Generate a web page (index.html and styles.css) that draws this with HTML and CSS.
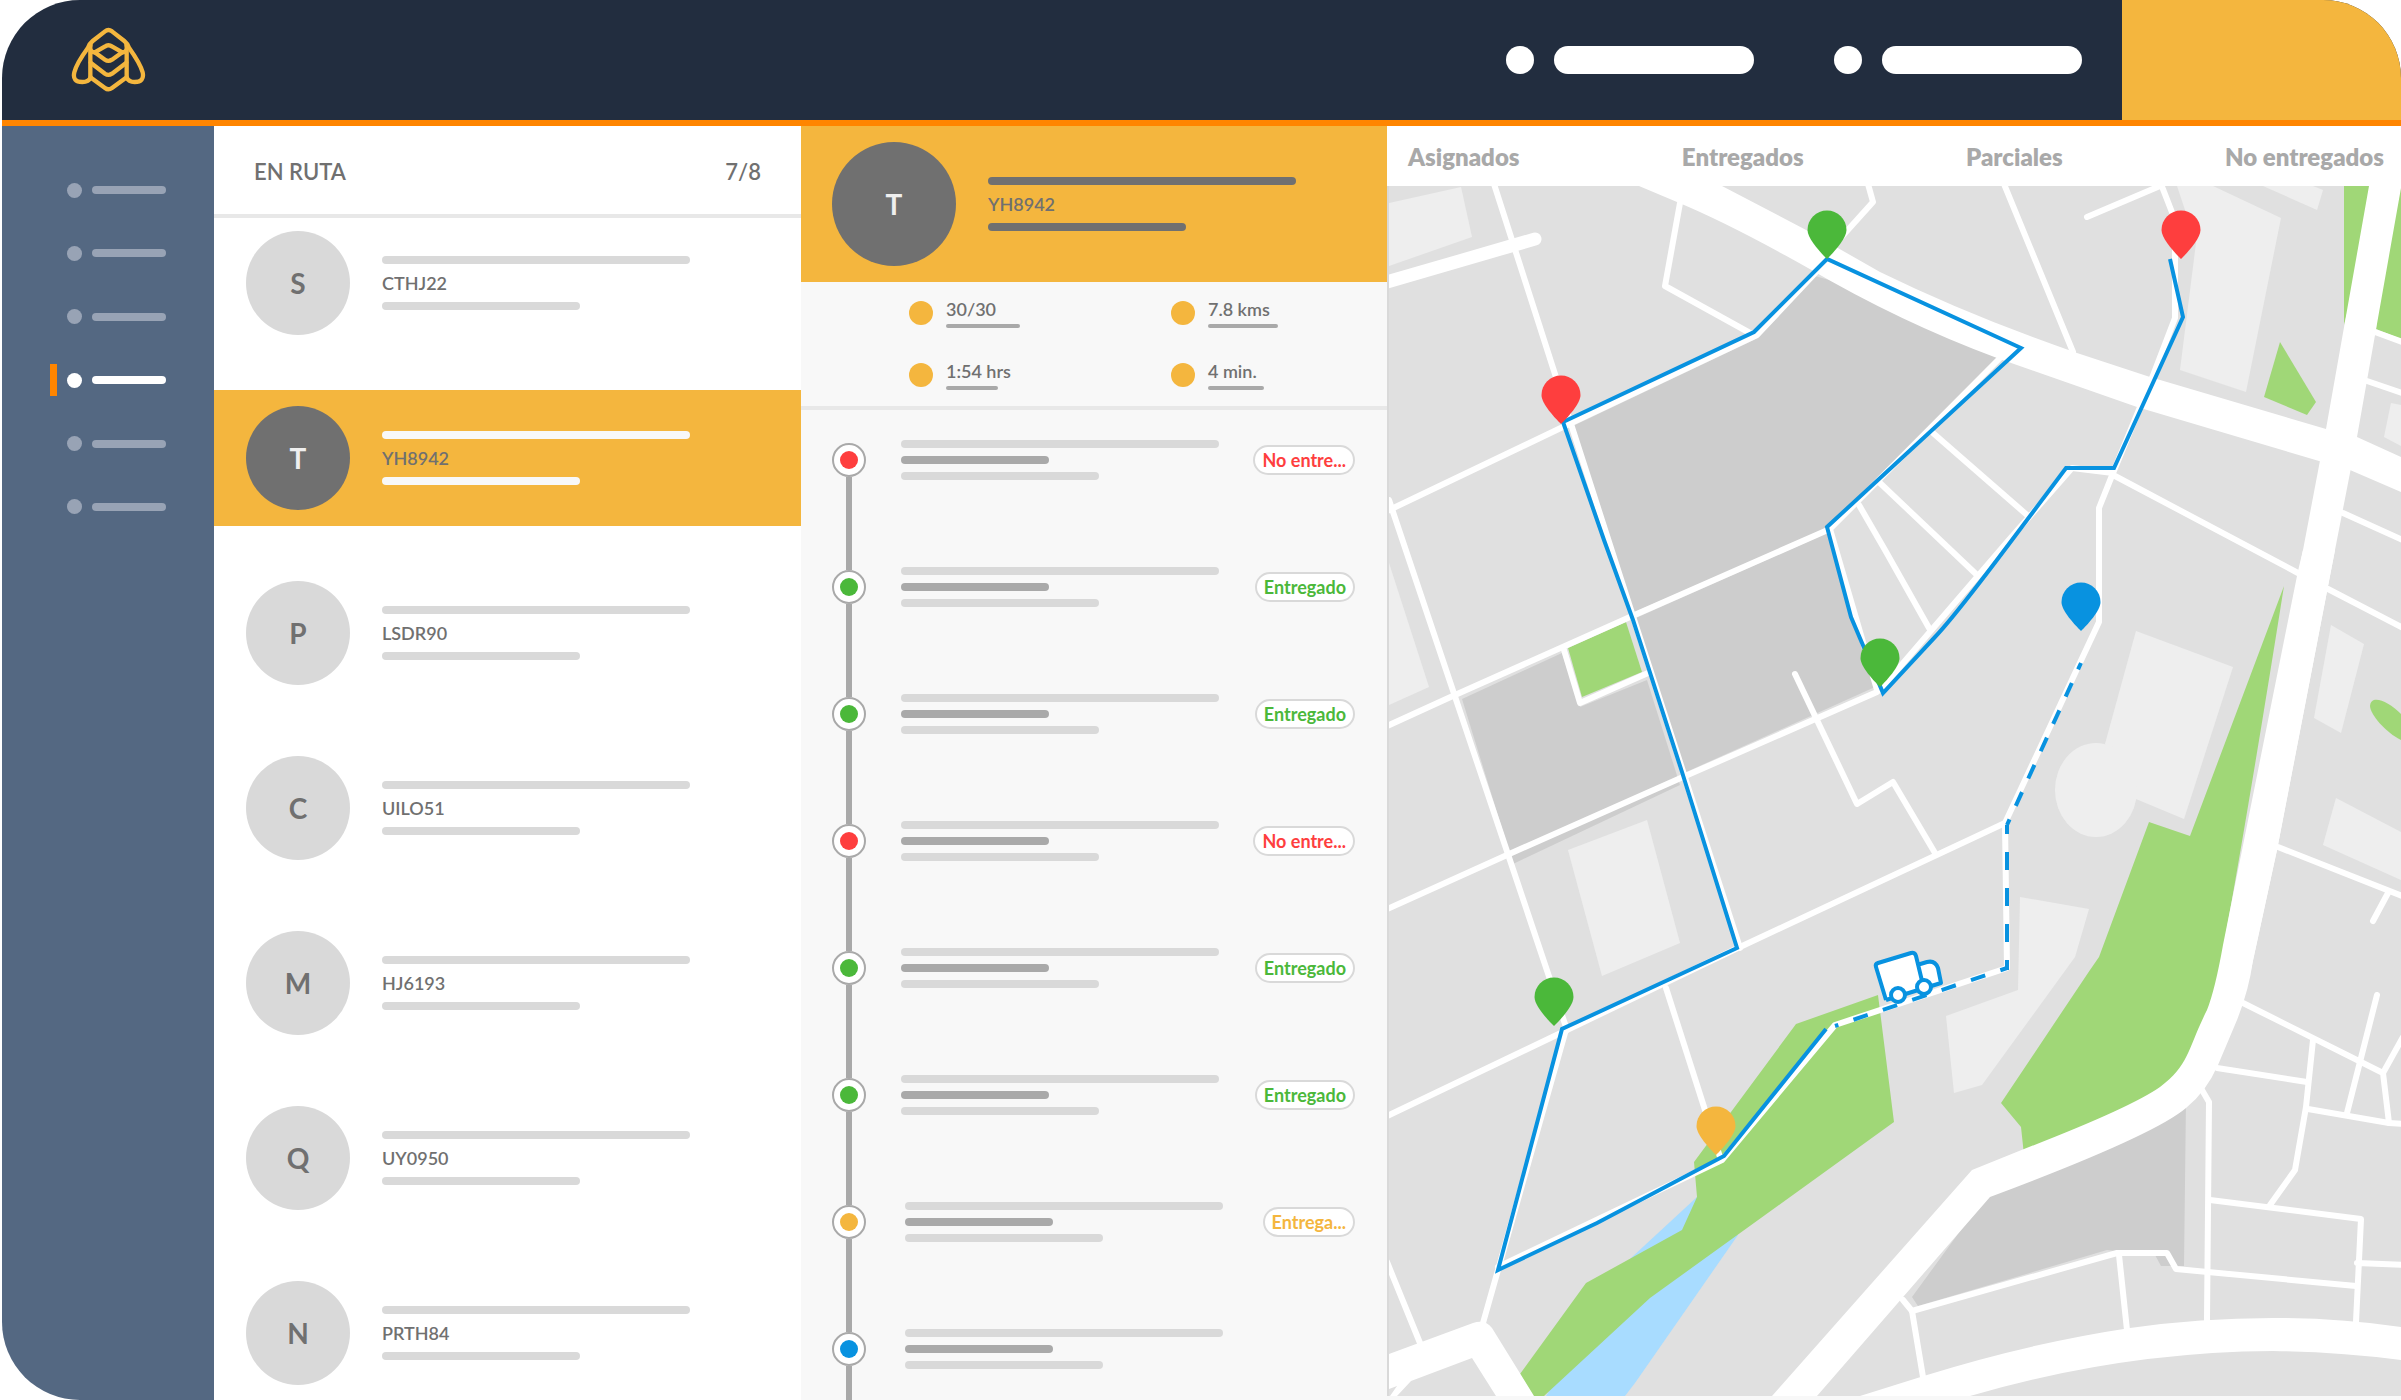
FILE: index.html
```html
<!DOCTYPE html>
<html lang="es">
<head>
<meta charset="utf-8">
<meta name="viewport" content="width=device-width, initial-scale=1">
<title>Rutas</title>
<link rel="stylesheet" href="styles.css">
</head>
<body>
<div class="app">
  <header class="topbar">
    <a class="logo" href="#" aria-label="Inicio">
      <svg viewBox="60 48 231 204" width="77" height="68" fill="none" stroke="currentColor" stroke-width="13" stroke-linejoin="round" stroke-linecap="round">
        <path d="M122 202 Q116 216 97 216 Q66 216 73 187 Q80 160 113 115 Q117 102 128 93 L165 64 Q175 56 186 64 L223 93 Q234 102 238 115 Q270 160 278 187 Q284 216 254 216 Q236 216 230 202"/>
        <path d="M121 124 V202 L165 234 Q175 242 186 234 L230 202 V124"/>
        <path d="M122 104 Q117 126 134 127 L164 110 Q175 102 187 110 L217 127 Q234 126 229 104"/>
        <path d="M134 127 L165 149 Q175 156 186 149 L217 127"/>
        <path d="M122 158 L165 191 Q175 198 186 191 L229 158"/>
      </svg>
    </a>
    <div class="topbar-links">
      <a class="top-link" href="#" aria-label="Cuenta"><span class="top-dot"></span><span class="top-bar"></span></a>
      <a class="top-link" href="#" aria-label="Ayuda"><span class="top-dot"></span><span class="top-bar"></span></a>
    </div>
    <div class="topbar-block"></div>
  </header>

  <nav class="sidebar" aria-label="Principal">
    <ul class="nav-list">
      <li><a class="nav-item" href="#" aria-label="Sección 1"><span class="nav-mark"></span><span class="nav-dot"></span><span class="nav-bar"></span></a></li>
      <li><a class="nav-item" href="#" aria-label="Sección 2"><span class="nav-mark"></span><span class="nav-dot"></span><span class="nav-bar"></span></a></li>
      <li><a class="nav-item" href="#" aria-label="Sección 3"><span class="nav-mark"></span><span class="nav-dot"></span><span class="nav-bar"></span></a></li>
      <li><a class="nav-item is-active" href="#" aria-label="Sección 4" aria-current="page"><span class="nav-mark"></span><span class="nav-dot"></span><span class="nav-bar"></span></a></li>
      <li><a class="nav-item" href="#" aria-label="Sección 5"><span class="nav-mark"></span><span class="nav-dot"></span><span class="nav-bar"></span></a></li>
      <li><a class="nav-item" href="#" aria-label="Sección 6"><span class="nav-mark"></span><span class="nav-dot"></span><span class="nav-bar"></span></a></li>
    </ul>
  </nav>

  <section class="routes">
    <div class="routes-head"><h2>EN RUTA</h2><span>7/8</span></div>
    <ul class="route-list">
      <li><a class="route" href="#"><span class="avatar">S</span><span class="route-info"><span class="bar bar-long"></span><span class="plate">CTHJ22</span><span class="bar bar-mid"></span></span></a></li>
      <li><a class="route is-active" href="#"><span class="avatar">T</span><span class="route-info"><span class="bar bar-long"></span><span class="plate">YH8942</span><span class="bar bar-mid"></span></span></a></li>
      <li><a class="route" href="#"><span class="avatar">P</span><span class="route-info"><span class="bar bar-long"></span><span class="plate">LSDR90</span><span class="bar bar-mid"></span></span></a></li>
      <li><a class="route" href="#"><span class="avatar">C</span><span class="route-info"><span class="bar bar-long"></span><span class="plate">UILO51</span><span class="bar bar-mid"></span></span></a></li>
      <li><a class="route" href="#"><span class="avatar">M</span><span class="route-info"><span class="bar bar-long"></span><span class="plate">HJ6193</span><span class="bar bar-mid"></span></span></a></li>
      <li><a class="route" href="#"><span class="avatar">Q</span><span class="route-info"><span class="bar bar-long"></span><span class="plate">UY0950</span><span class="bar bar-mid"></span></span></a></li>
      <li><a class="route" href="#"><span class="avatar">N</span><span class="route-info"><span class="bar bar-long"></span><span class="plate">PRTH84</span><span class="bar bar-mid"></span></span></a></li>
    </ul>
  </section>

  <section class="detail">
    <div class="detail-head">
      <span class="avatar avatar-large">T</span>
      <div class="detail-info"><span class="bar bar-long"></span><span class="plate">YH8942</span><span class="bar bar-mid"></span></div>
    </div>
    <ul class="stats">
      <li class="stat"><span class="stat-dot"></span><span class="stat-text">30/30<span class="stat-line w-74"></span></span></li>
      <li class="stat"><span class="stat-dot"></span><span class="stat-text">7.8 kms<span class="stat-line w-70"></span></span></li>
      <li class="stat"><span class="stat-dot"></span><span class="stat-text">1:54 hrs<span class="stat-line w-52"></span></span></li>
      <li class="stat"><span class="stat-dot"></span><span class="stat-text">4 min.<span class="stat-line w-56"></span></span></li>
    </ul>
    <ol class="timeline">
      <li class="stop red"><span class="track"><span class="ring"></span></span><div class="stop-body"><div class="lines"><span class="bar"></span><span class="bar"></span><span class="bar"></span></div><span class="badge">No entre...</span></div></li>
      <li class="stop green"><span class="track"><span class="ring"></span></span><div class="stop-body"><div class="lines"><span class="bar"></span><span class="bar"></span><span class="bar"></span></div><span class="badge">Entregado</span></div></li>
      <li class="stop green"><span class="track"><span class="ring"></span></span><div class="stop-body"><div class="lines"><span class="bar"></span><span class="bar"></span><span class="bar"></span></div><span class="badge">Entregado</span></div></li>
      <li class="stop red"><span class="track"><span class="ring"></span></span><div class="stop-body"><div class="lines"><span class="bar"></span><span class="bar"></span><span class="bar"></span></div><span class="badge">No entre...</span></div></li>
      <li class="stop green"><span class="track"><span class="ring"></span></span><div class="stop-body"><div class="lines"><span class="bar"></span><span class="bar"></span><span class="bar"></span></div><span class="badge">Entregado</span></div></li>
      <li class="stop green"><span class="track"><span class="ring"></span></span><div class="stop-body"><div class="lines"><span class="bar"></span><span class="bar"></span><span class="bar"></span></div><span class="badge">Entregado</span></div></li>
      <li class="stop yellow pending"><span class="track"><span class="ring"></span></span><div class="stop-body"><div class="lines"><span class="bar"></span><span class="bar"></span><span class="bar"></span></div><span class="badge">Entrega...</span></div></li>
      <li class="stop blue pending"><span class="track"><span class="ring"></span></span><div class="stop-body"><div class="lines"><span class="bar"></span><span class="bar"></span><span class="bar"></span></div></div></li>
    </ol>
  </section>

  <section class="map-panel">
    <div class="tabs">
      <button type="button">Asignados</button>
      <button type="button">Entregados</button>
      <button type="button">Parciales</button>
      <button type="button">No entregados</button>
    </div>
    <svg class="map" viewBox="1389 186 1012 1210" preserveAspectRatio="xMinYMin slice" role="img" aria-label="Mapa de la ruta">
      <defs>
        <path id="pin" d="M0 0C-6 -6 -19.500 -20 -19.500 -29A19.500 19.500 0 0 1 19.500 -29C19.500 -20 6 -6 0 0Z"/>
      </defs>
      <rect class="land" x="1389" y="186" width="1012" height="1210"/>
      <!-- city blocks -->
      <g class="block">
        <path d="M1573 426L1758 338L1815 276L1900 300L2000 356L1828 529L1632 613Z"/>
        <path d="M1636 618L1827 533L1875 687L1684 773Z"/>
        <path d="M1462 699L1562 653L1580 707L1647 680L1680 785L1513 864Z"/>
        <path d="M2186 1100L2184 1266H2161L2155 1255L2107 1250L1918 1306L1912 1297L1985 1197Z"/>
      </g>
      <!-- buildings -->
      <g class="building">
        <path d="M1389 203L1461 187L1472 237L1389 266Z"/>
        <path d="M1389 563L1429 687L1389 705Z"/>
        <path d="M1568 850L1647 820L1680 943L1602 976Z"/>
        <path d="M2177 186H2213L2281 218L2246 392L2180 370L2196 243L2185 210Z"/>
        <path d="M2263 186H2313L2323 190L2317 210Z"/>
        <path d="M2391 403L2401 405V446L2384 437Z"/>
        <path d="M2136 631L2233 667L2184 819L2136 799L2105 744Z"/>
        <ellipse cx="2096" cy="790" rx="41" ry="47"/>
        <path d="M2331 625L2364 644L2341 733L2314 718Z"/>
        <path d="M2336 798L2401 832V880L2323 845Z"/>
        <path d="M2020 897L2089 909L2075 957L1982 1085L1954 1093L1946 1016L2018 990Z"/>
      </g>
      <path class="water" d="M1697 1197L1631 1258L1546 1396H1625L1635 1383L1738 1235Z"/>
      <!-- parks -->
      <g class="park">
        <path d="M1568 648L1626 622L1642 672L1582 697Z"/>
        <path d="M2344 186H2380L2344 325Z"/>
        <path d="M2401 186V339L2376 329L2390 186Z"/>
        <path d="M2280 342L2316 402L2307 415L2264 397Z"/>
        <path d="M2401 714C2388 701 2371 694 2370 706C2370 714 2386 733 2401 740Z"/>
        <path d="M2284 586Q2250 800 2223 950L2215 1040L2150 1120L2024 1155L2021 1127L2001 1103L2090 970L2099 957L2149 822L2190 836Z"/>
        <path d="M1878 995L1796 1024L1694 1162L1697 1197L1682 1230L1586 1283L1520 1374L1533 1396H1544L1650 1298L1894 1122Z"/>
      </g>
      <!-- avenues -->
      <g class="avenue">
        <path d="M1639 186H1722L1808 231L1880 272Q1970 316 2077 353L2150 377L2326 429L2357 437L2401 457V492L2350 470L2319 461L2137 407L1997 358Q1900 322 1808 268Q1730 224 1677 202Z"/>
        <path d="M2335 550L2277 850L2253 960Q2249 990 2237 1020L2218 1065Q2206 1092 2186 1108Q2153 1136 1990 1197L1817 1396H1772L1972 1170L2024 1149Q2130 1108 2160 1087C2190 1064 2187 1050 2207 1010Q2215 990 2223 945L2298 571L2303 550Z"/>
        <path d="M2369 186H2401V188L2357 437L2335 550L2277 850L2251 970H2219L2303 550L2326 429Z"/>
        <path d="M1860 1396L1927 1375Q2030 1343 2130 1328Q2200 1318 2273 1318Q2340 1318 2401 1327V1360Q2340 1352 2273 1351Q2120 1352 1970 1396Z"/>
        <path d="M1389 1354L1473 1323Q1485 1319 1492 1328L1534 1396H1496L1472 1358L1411 1381L1397 1396H1390L1397 1386L1389 1389Z"/>
      </g>
      <path class="street street-wide" d="M1380 284L1535 239"/>
      <!-- streets -->
      <g class="street">
        <path d="M1494 184L1571 424L1740 948"/>
        <path d="M1385 512L1567 425L1757 335L1820 268"/>
        <path d="M1389 500L1567 1030"/>
        <path d="M1385 727L1455 695L1630 617L1830 529"/>
        <path d="M1385 910L1507 855L1683 777L1877 692"/>
        <path d="M1564 650L1580 703L1648 673"/>
        <path d="M1680 203L1665 286L1750 333"/>
        <path d="M1868 184L1873 202L1837 242"/>
        <path d="M2004 184L2073 352"/>
        <path d="M2087 217L2160 186"/>
        <path d="M2161 184L2175 220V318L2152 378L2113 473L2099 508V622L2005 823L2007 968L1835 1025L1722 1160L1498 1267"/>
        <path d="M2113 473L2072 468L2008 541L1880 690"/>
        <path d="M2115 476L2298 573"/>
        <path d="M2328 589L2405 629"/>
        <path d="M1933 433L2027 515M1880 483L1977 575M1859 505L1885 550L1929 628"/>
        <path d="M2008 350L1830 529L1877 690"/>
        <path d="M1795 674L1857 804L1893 782L1935 853"/>
        <path d="M2005 823L1740 947L1567 1030L1385 1117"/>
        <path d="M1666 988L1705 1110L1720 1157"/>
        <path d="M1565 1033L1498 1270L1483 1323"/>
        <path d="M1387 1262L1420 1343"/>
        <path d="M2375 332L2405 343M2367 381L2405 394M2343 513L2405 541"/>
        <path d="M2278 847L2405 897M2388 893L2373 921"/>
        <path d="M2243 1003L2383 1073L2403 1037M2383 1073L2389 1123"/>
        <path d="M2308 1109L2389 1123L2405 1124M2377 995L2347 1113"/>
        <path d="M2313 1040L2306 1107L2295 1170L2270 1205"/>
        <path d="M2217 1068L2307 1082"/>
        <path d="M2202 1090L2209 1102L2207 1320"/>
        <path d="M2210 1200L2361 1219L2356 1322M2357 1263L2405 1265"/>
        <path d="M1903 1300L1912 1311L2117 1253H2167L2176 1269L2356 1286"/>
        <path d="M1912 1311L1923 1377M2119 1255L2127 1330"/>
      </g>
      <!-- travelled and remaining route -->
      <g class="path">
        <path d="M2170 259L2183 317L2114 468H2066L2012 540Q1955 616 1935 637L1883 693L1865 650L1851 617L1827 527L2021 348L1827 259L1754 332L1563 422L1604 540L1633 620L1682 772L1737 948L1562 1029L1498 1270L1597 1223L1724 1156L1826 1029"/>
        <path d="M2081 663L2007 825" stroke-dasharray="15 15" stroke-dashoffset="8"/>
        <path d="M2007 825V970" stroke-dasharray="18 18" stroke-dashoffset="9"/>
        <path d="M2007 968L1835 1026" stroke-dasharray="15 16" stroke-dashoffset="8"/>
      </g>
      <g class="truck">
        <path d="M1886 1000L1876 967Q1875 964 1878 963L1911 953Q1915 952 1916 956L1923 985M1917 965L1927 962Q1935 960 1938 968L1941 983L1886 1000"/>
        <circle cx="1898" cy="995" r="7"/>
        <circle cx="1924" cy="987" r="7"/>
      </g>
      <use class="pin green" href="#pin" x="1827" y="259"/>
      <use class="pin red" href="#pin" x="1561" y="424"/>
      <use class="pin red" href="#pin" x="2181" y="259"/>
      <use class="pin blue" href="#pin" x="2081" y="631"/>
      <use class="pin green" href="#pin" x="1880" y="687"/>
      <use class="pin green" href="#pin" x="1554" y="1026"/>
      <use class="pin yellow" href="#pin" x="1716" y="1155"/>
    </svg>
  </section>
</div>
</body>
</html>
```
FILE: styles.css
```css
:root {
  --navy: #222d3f;
  --slate: #546882;
  --orange: #ff8500;
  --amber: #f4b63e;
  --text: #707070;
  --muted: #a9a9a9;
  --soft: #d9d9d9;
  --rule: #e8e8e8;
  --panel: #f8f8f8;
  --red: #fe3e3e;
  --green: #4bb83a;
  --blue: #0892e0;
}

* { box-sizing: border-box; }

body {
  margin: 0;
  background: #fff;
  color: var(--text);
  font-family: Lato, "Open Sans", sans-serif;
  font-size: 18px;
  line-height: 24px;
  font-weight: 700;
}

ul, ol { list-style: none; margin: 0; padding: 0; }
a { color: inherit; text-decoration: none; }

.app {
  display: grid;
  grid-template-columns: 212px minmax(0, 587fr) minmax(0, 586fr) minmax(0, 1014fr);
  grid-template-rows: 126px 1fr;
  min-height: 100vh;
  margin-left: 2px;
  border-radius: 78px 78px 0 78px;
  overflow: hidden;
}

/* Top bar */
.topbar {
  grid-column: 1 / -1;
  display: flex;
  align-items: center;
  background: var(--navy);
  border-bottom: 6px solid var(--orange);
}
.logo { margin-left: 68px; color: var(--amber); }
.logo svg { display: block; }
.topbar-links { display: flex; gap: 80px; margin-left: auto; }
.top-link { display: flex; gap: 20px; }
.top-dot { width: 28px; height: 28px; border-radius: 50%; background: #fff; }
.top-bar { width: 200px; height: 28px; border-radius: 14px; background: #fff; }
.topbar-block { align-self: stretch; width: 279px; margin-left: 40px; background: var(--amber); }

/* Side navigation */
.sidebar { background: var(--slate); padding-top: 48px; }
.nav-list { display: flex; flex-direction: column; justify-content: space-between; height: 349px; }
.nav-item { display: flex; align-items: center; gap: 10px; height: 32px; padding-left: 48px; }
.nav-mark { width: 7px; height: 32px; }
.nav-dot { width: 15px; height: 15px; border-radius: 50%; background: #98a3b5; }
.nav-bar { width: 74px; height: 8px; border-radius: 4px; background: #98a3b5; }
.nav-item.is-active .nav-mark { background: var(--orange); }
.nav-item.is-active .nav-dot,
.nav-item.is-active .nav-bar { background: #fff; }

/* Shared pieces */
.bar { display: block; height: 8px; border-radius: 4px; background: var(--soft); }
.bar-long { width: 308px; }
.bar-mid { width: 198px; }
.avatar {
  display: flex;
  align-items: center;
  justify-content: center;
  flex: none;
  width: 104px;
  height: 104px;
  border-radius: 50%;
  background: var(--soft);
  font-size: 28px;
}
.plate { display: block; font-weight: 600; }

/* Vehicles on route */
.routes { background: #fff; }
.routes-head {
  display: flex;
  justify-content: space-between;
  align-items: center;
  height: 92px;
  padding: 4px 40px 0;
  border-bottom: 4px solid var(--rule);
  font-size: 22px;
  font-weight: 600;
}
.routes-head h2 { margin: 0; font: inherit; }
.route-list { display: flex; flex-direction: column; gap: 39px; margin-top: -3px; }
.route { display: flex; align-items: center; gap: 32px; padding: 16px 32px; }
.route-list li:last-child .route { padding-bottom: 0; }
.route-info, .detail-info { display: flex; flex-direction: column; gap: 7px; }
.route.is-active { background: var(--amber); }
.route.is-active .bar { background: var(--panel); }
.route.is-active .avatar, .avatar-large { background: var(--text); color: #efefef; }

/* Selected vehicle */
.detail { display: flex; flex-direction: column; background: var(--panel); }
.detail-head {
  display: flex;
  align-items: center;
  gap: 32px;
  height: 156px;
  padding: 0 31px;
  background: var(--amber);
}
.avatar-large { width: 124px; height: 124px; }
.detail-info .bar { background: var(--text); }
.stats {
  display: grid;
  grid-template-columns: 262px 1fr;
  grid-auto-rows: 62px;
  height: 128px;
  padding-left: 108px;
  padding-top: 13px;
  border-bottom: 4px solid var(--rule);
}
.stat { display: flex; gap: 13px; }
.stat-dot { flex: none; width: 24px; height: 24px; margin-top: 6px; border-radius: 50%; background: var(--amber); }
.stat-text { font-weight: 600; line-height: 28px; }
.stat-line { display: block; height: 4px; margin-top: 1px; border-radius: 2px; background: var(--muted); }
.w-74 { width: 74px; }
.w-70 { width: 70px; }
.w-52 { width: 52px; }
.w-56 { width: 56px; }

.timeline { flex: 1; display: flex; flex-direction: column; padding: 33px 32px 0 31px; }
.stop { display: flex; gap: 35px; min-height: 127px; }
.stop:last-child { flex: 1; min-height: 60px; }
.stop.pending { gap: 39px; }
.track { display: flex; flex-direction: column; align-items: center; }
.track::after { content: ""; flex: 1; width: 6px; background: var(--muted); }
.ring {
  display: flex;
  align-items: center;
  justify-content: center;
  width: 34px;
  height: 34px;
  border: 2px solid var(--muted);
  border-radius: 50%;
  background: #fff;
}
.ring::after { content: ""; width: 18px; height: 18px; border-radius: 50%; background: currentColor; }
.stop-body { flex: 1; display: flex; justify-content: space-between; align-items: center; height: 34px; }
.lines { display: flex; flex-direction: column; gap: 8px; }
.lines .bar { width: 318px; }
.lines .bar:nth-child(2) { width: 148px; background: var(--muted); }
.lines .bar:nth-child(3) { width: 198px; }
.badge {
  height: 30px;
  padding: 0 7px;
  border: 2px solid var(--soft);
  border-radius: 15px;
  background: #fff;
  line-height: 27px;
}
.red { color: var(--red); }
.green { color: var(--green); }
.yellow { color: var(--amber); }
.blue { color: var(--blue); }

/* Map */
.map-panel {
  display: flex;
  flex-direction: column;
  padding-bottom: 4px;
  background: var(--panel);
}
.tabs {
  display: flex;
  justify-content: space-between;
  align-items: center;
  height: 60px;
  padding: 2px 17px 0 21px;
  background: #fff;
}
.tabs button {
  padding: 0;
  border: 0;
  background: none;
  color: var(--muted);
  font: 800 24px/32px Lato, "Open Sans", sans-serif;
}
.map { flex: 1 1 0; min-height: 0; width: 100%; border-left: 2px solid var(--soft); }
.land { fill: #e0e0e0; }
.block { fill: #cdcdcd; }
.building { fill: #eee; }
.park { fill: #a0d777; }
.water { fill: #a8dcff; }
.avenue { fill: #fff; }
.street { fill: none; stroke: #fff; stroke-width: 6px; stroke-linecap: round; stroke-linejoin: round; }
.street-wide { stroke-width: 13px; }
.path { fill: none; stroke: var(--blue); stroke-width: 4px; }
.truck { fill: #fff; stroke: var(--blue); stroke-width: 4px; stroke-linejoin: round; }
.pin { fill: currentColor; }
```
